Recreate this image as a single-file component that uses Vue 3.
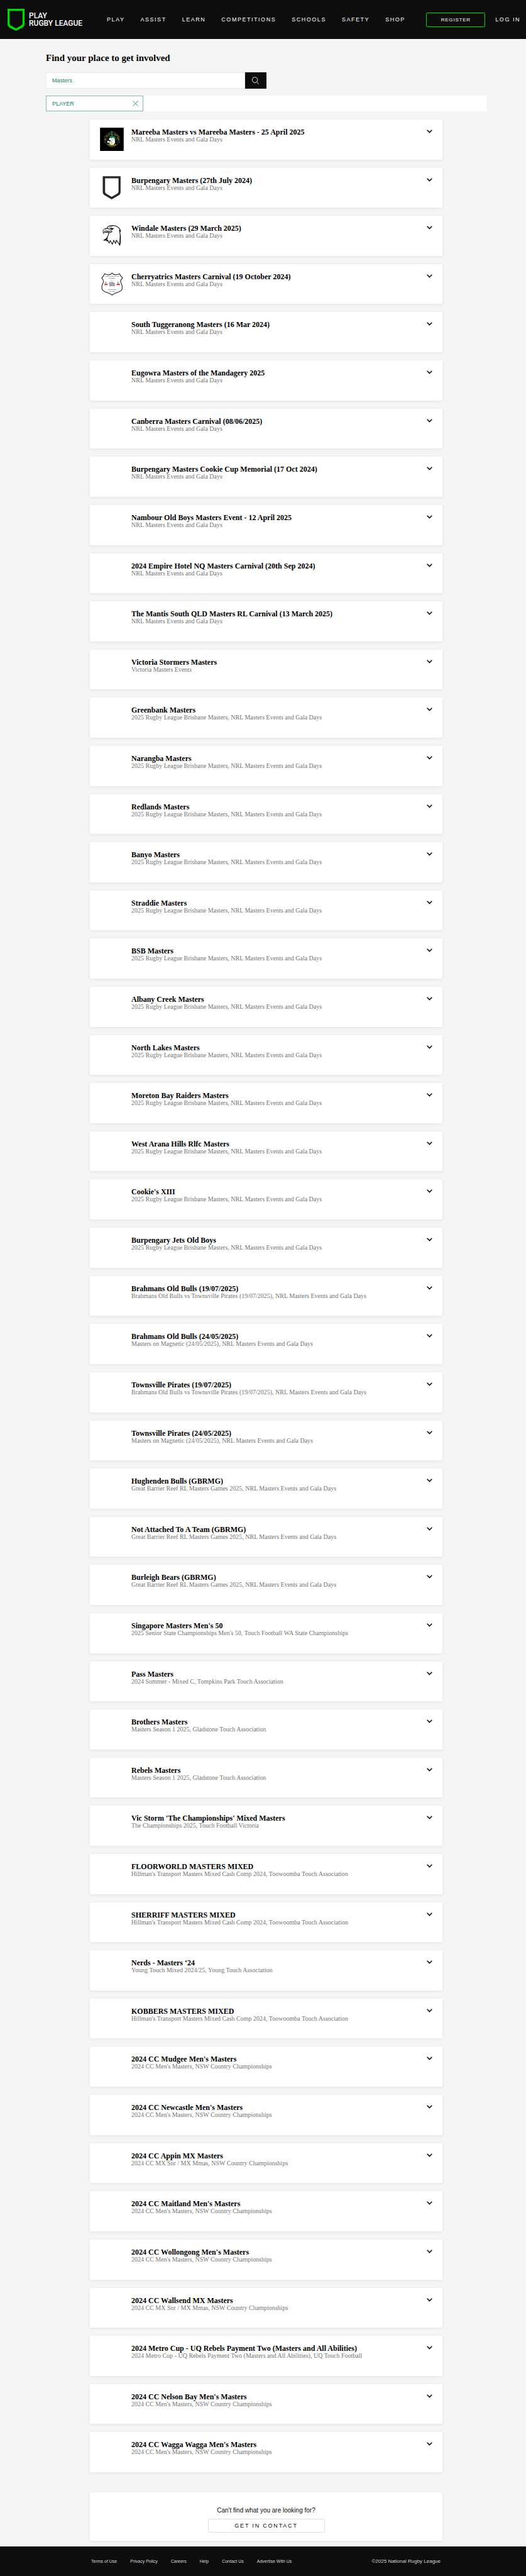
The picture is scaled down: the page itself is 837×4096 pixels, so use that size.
<script setup>
import { ref } from 'vue'

const navLinks = ['PLAY', 'ASSIST', 'LEARN', 'COMPETITIONS', 'SCHOOLS', 'SAFETY', 'SHOP']
const footerLinks = ['Terms of Use', 'Privacy Policy', 'Careers', 'Help', 'Contact Us', 'Advertise With Us']

const query = ref('Masters')

const gala = 'NRL Masters Events and Gala Days'
const brisbane = '2025 Rugby League Brisbane Masters, ' + gala
const pirates = 'Brahmans Old Bulls vs Townsville Pirates (19/07/2025), ' + gala
const magnetic = 'Masters on Magnetic (24/05/2025), ' + gala
const reef = 'Great Barrier Reef RL Masters Games 2025, ' + gala
const gladstone = 'Masters Season 1 2025, Gladstone Touch Association'
const hillman = "Hillman's Transport Masters Mixed Cash Comp 2024, Toowoomba Touch Association"
const country = "2024 CC Men's Masters, NSW Country Championships"
const countryMixed = '2024 CC MX Snr / MX Mmas, NSW Country Championships'

const results = [
  { title: 'Mareeba Masters vs Mareeba Masters - 25 April 2025', detail: gala, crest: 'mareeba' },
  { title: 'Burpengary Masters (27th July 2024)', detail: gala, crest: 'shield' },
  { title: 'Windale Masters (29 March 2025)', detail: gala, crest: 'eagle' },
  { title: 'Cherryatrics Masters Carnival (19 October 2024)', detail: gala, crest: 'cherry' },
  { title: 'South Tuggeranong Masters (16 Mar 2024)', detail: gala },
  { title: 'Eugowra Masters of the Mandagery 2025', detail: gala },
  { title: 'Canberra Masters Carnival (08/06/2025)', detail: gala },
  { title: 'Burpengary Masters Cookie Cup Memorial (17 Oct 2024)', detail: gala },
  { title: 'Nambour Old Boys Masters Event - 12 April 2025', detail: gala },
  { title: '2024 Empire Hotel NQ Masters Carnival (20th Sep 2024)', detail: gala },
  { title: 'The Mantis South QLD Masters RL Carnival (13 March 2025)', detail: gala },
  { title: 'Victoria Stormers Masters', detail: 'Victoria Masters Events' },
  { title: 'Greenbank Masters', detail: brisbane },
  { title: 'Narangba Masters', detail: brisbane },
  { title: 'Redlands Masters', detail: brisbane },
  { title: 'Banyo Masters', detail: brisbane },
  { title: 'Straddie Masters', detail: brisbane },
  { title: 'BSB Masters', detail: brisbane },
  { title: 'Albany Creek Masters', detail: brisbane },
  { title: 'North Lakes Masters', detail: brisbane },
  { title: 'Moreton Bay Raiders Masters', detail: brisbane },
  { title: 'West Arana Hills Rlfc Masters', detail: brisbane },
  { title: "Cookie's XIII", detail: brisbane },
  { title: 'Burpengary Jets Old Boys', detail: brisbane },
  { title: 'Brahmans Old Bulls (19/07/2025)', detail: pirates },
  { title: 'Brahmans Old Bulls (24/05/2025)', detail: magnetic },
  { title: 'Townsville Pirates (19/07/2025)', detail: pirates },
  { title: 'Townsville Pirates (24/05/2025)', detail: magnetic },
  { title: 'Hughenden Bulls (GBRMG)', detail: reef },
  { title: 'Not Attached To A Team (GBRMG)', detail: reef },
  { title: 'Burleigh Bears (GBRMG)', detail: reef },
  { title: "Singapore Masters Men's 50", detail: "2025 Senior State Championships Men's 50, Touch Football WA State Championships" },
  { title: 'Pass Masters', detail: '2024 Summer - Mixed C, Tompkins Park Touch Association' },
  { title: 'Brothers Masters', detail: gladstone },
  { title: 'Rebels Masters', detail: gladstone },
  { title: "Vic Storm 'The Championships' Mixed Masters", detail: 'The Championships 2025, Touch Football Victoria' },
  { title: 'FLOORWORLD MASTERS MIXED', detail: hillman },
  { title: 'SHERRIFF MASTERS MIXED', detail: hillman },
  { title: 'Nerds - Masters ‘24', detail: 'Young Touch Mixed 2024/25, Young Touch Association' },
  { title: 'KOBBERS MASTERS MIXED', detail: hillman },
  { title: "2024 CC Mudgee Men's Masters", detail: country },
  { title: "2024 CC Newcastle Men's Masters", detail: country },
  { title: '2024 CC Appin MX Masters', detail: countryMixed },
  { title: "2024 CC Maitland Men's Masters", detail: country },
  { title: "2024 CC Wollongong Men's Masters", detail: country },
  { title: '2024 CC Wallsend MX Masters', detail: countryMixed },
  {
    title: '2024 Metro Cup - UQ Rebels Payment Two (Masters and All Abilities)',
    detail: '2024 Metro Cup - UQ Rebels Payment Two (Masters and All Abilities), UQ Touch Football',
  },
  { title: "2024 CC Nelson Bay Men's Masters", detail: country },
  { title: "2024 CC Wagga Wagga Men's Masters", detail: country },
]
</script>

<template>
  <div class="page">
    <header class="header">
      <a class="brand" href="#" aria-label="Play Rugby League">
        <svg class="brand-mark" viewBox="0 0 43 56" aria-hidden="true">
          <path fill="#00dc00" fill-rule="evenodd" d="M0 0H43V39Q43 44 39 47L21.500 56 4 47Q0 44 0 39ZM5 5V37Q5 40 8 42.500L21.500 50 35 42.500Q38 40 38 37V5Z" />
        </svg>
        <span class="brand-name">PLAY<br />RUGBY LEAGUE</span>
      </a>
      <nav class="nav">
        <a v-for="link in navLinks" :key="link" href="#">{{ link }}</a>
      </nav>
      <div class="account">
        <button class="register" type="button">REGISTER</button>
        <a class="login" href="#">LOG IN</a>
      </div>
    </header>

    <main class="main">
      <h1 class="heading">Find your place to get involved</h1>
      <form class="search" role="search" @submit.prevent>
        <input v-model="query" class="search-input" type="text" aria-label="Search" />
        <button class="search-button" type="submit" aria-label="Search">
          <svg viewBox="0 0 18 19" aria-hidden="true">
            <circle cx="7.500" cy="8" r="7" fill="none" stroke="#fff" stroke-width="1.500" />
            <path d="M12 13.500L17.500 18.500" stroke="#fff" stroke-width="1.500" />
          </svg>
        </button>
      </form>
      <div class="filters">
        <button class="chip" type="button">
          <span>PLAYER</span>
          <svg viewBox="0 0 14 14" aria-hidden="true">
            <path d="M0.500 0.500L13.500 13.500M13.500 0.500L0.500 13.500" stroke="#138560" stroke-width="1.300" />
          </svg>
        </button>
      </div>

      <ul class="results">
        <li v-for="item in results" :key="item.title" class="card">
          <div class="crest">
            <svg v-if="item.crest === 'mareeba'" viewBox="0 0 183 180" aria-hidden="true">
              <rect width="183" height="180" fill="#000" />
              <circle cx="92" cy="91" r="57" fill="none" stroke="#8b8f8c" stroke-width="2.500" />
              <circle cx="92" cy="91" r="38" fill="none" stroke="#7d827f" stroke-width="2" />
              <path d="M34 66L46 72V109L34 116ZM150 66L138 72V109L150 116Z" fill="#000" stroke="#8b8f8c" stroke-width="2" />
              <path d="M41 84V100M143 84V100" stroke="#d8c21c" stroke-width="5" stroke-dasharray="3 2" />
              <path d="M78 37Q81 27 86 29V22H91V29Q101 28 105 36L98 40Q88 36 78 41Z" fill="#12644a" />
              <path d="M82 42Q92 38 99 44V56Q91 62 84 54Z" fill="#555b58" />
              <path d="M69 72Q78 59 95 59Q116 62 121 80L117 105 101 91 76 80Z" fill="#0d7541" />
              <path d="M70 84Q81 76 91 82Q101 69 110 82Q121 97 113 123L98 132 77 128 70 113 58 119 56 105 66 101 77 109 85 101 68 94Z" fill="#fff" />
              <path d="M71 120L87 107 112 119 104 134 82 132Z" fill="#fff" />
              <path d="M86 84L96 98 87 110M101 76L112 104M71 117L91 119M87 107L99 122" fill="none" stroke="#25322c" stroke-width="2" />
              <path d="M75 107L94 104M80 124L98 126" stroke="#d9c422" stroke-width="3" />
              <g class="crest-yellow">
                <text x="54 61 69" y="74 64 57" rotate="-58 -43 -29">OLD</text>
                <text x="107 117 125 130" y="53 58 66 76" rotate="28 42 56 70">BOYS</text>
                <text x="56 67 77 87 98 108 118" y="130 138 142 144 144 142 137" rotate="36 22 10 -1 -12 -23 -35">MAREEBA</text>
              </g>
            </svg>
            <svg v-else-if="item.crest === 'shield'" viewBox="0 0 183 180" aria-hidden="true">
              <path fill="#272727" fill-rule="evenodd" d="M21 1H159V123Q159 140 145 148L90 180 36 148Q21 140 21 123ZM39 17V120Q39 130 48 136L90 160 132 136Q143 130 143 120V17Z" />
            </svg>
            <svg v-else-if="item.crest === 'eagle'" viewBox="0 0 183 180" aria-hidden="true">
              <g fill="none" stroke="#000" stroke-linejoin="round" stroke-linecap="round">
                <path stroke-width="5" d="M54 34Q57 14 94 12Q126 12 145 31Q154 40 158 51L149 49 158 60 152 61Q158 80 158 108Q159 140 153 166L141 145 126 127 120 152 106 126 95 158 79 129 71 148 58 123 54 134 50 124 28 126Q46 120 55 105Q64 90 68 70" />
                <path stroke-width="4" d="M54 34Q31 34 24 48Q20 62 27 75Q29 65 38 64L79 69 93 60 83 47Q71 37 54 34M29 59Q45 48 66 55L90 60M38 64Q54 57 76 64" />
                <path stroke-width="3" d="M38 42Q43 38 47 42M54 34L67 41M70 30Q78 20 94 20" />
              </g>
              <path fill="#000" d="M77 33Q91 30 106 34L108 40Q101 37 97 45Q87 49 81 39L75 38ZM28 126Q48 120 60 103L61 110Q55 122 43 129ZM149 47L160 61 153 64ZM154 80L161 98 154 164 150 158Z" />
            </svg>
            <svg v-else-if="item.crest === 'cherry'" viewBox="0 0 183 180" aria-hidden="true">
              <path fill="#fff" stroke="#3c3c3c" stroke-width="6" stroke-linejoin="round" d="M93 5Q84 17 70 19Q50 20 36 11Q30 27 13 44Q27 56 27 73Q12 102 15 128Q20 146 55 156Q79 164 93 176Q107 164 131 156Q166 146 171 128Q174 102 159 73Q159 56 175 44Q156 27 150 11Q136 20 116 19Q102 17 93 5Z" />
              <g class="crest-words" text-anchor="middle">
                <text x="93" y="35">YOUNG CABBY LEAGUE</text>
                <text x="93" y="51">MASTERS</text>
                <text x="93" y="137">CHERRYATRICS</text>
                <text x="93" y="152">EST. 2020</text>
              </g>
              <path fill="none" stroke="#d1959b" stroke-width="2" d="M84 57Q93 53 96 60L104 69 97 77 82 75 84 65 93 62" />
              <path fill="#b9b6c5" d="M71 80L80 73 102 76 117 86 114 105 74 108 70 96Z" />
              <path fill="none" stroke="#77758a" stroke-width="2" d="M67 84L110 87M76 76L85 105M97 76L91 108M103 77L111 104M71 98H116" />
              <circle cx="79" cy="103" r="6" fill="none" stroke="#77758a" stroke-width="2" />
              <circle cx="107" cy="103" r="6" fill="none" stroke="#77758a" stroke-width="2" />
              <path fill="#55a64b" d="M36 73L55 78 43 83ZM131 73L151 78 139 83Z" />
              <path fill="none" stroke="#55a64b" stroke-width="2" d="M43 76L40 91M43 76L52 91M138 76L135 91M138 76L147 91" />
              <g fill="#d71945"><circle cx="40" cy="94" r="6" /><circle cx="52" cy="94" r="6" /><circle cx="135" cy="94" r="6" /><circle cx="147" cy="94" r="6" /></g>
            </svg>
          </div>
          <div class="card-text">
            <h2>{{ item.title }}</h2>
            <p>{{ item.detail }}</p>
          </div>
          <button class="expand" type="button" :aria-label="'Show ' + item.title">
            <svg viewBox="0 0 14 9" aria-hidden="true">
              <path d="M1 1L7 7 13 1" fill="none" stroke="#111" stroke-width="2.500" />
            </svg>
          </button>
        </li>
      </ul>

      <section class="contact">
        <p>Can't find what you are looking for?</p>
        <button type="button">GET IN CONTACT</button>
      </section>
    </main>

    <footer class="footer">
      <nav class="footer-links">
        <a v-for="link in footerLinks" :key="link" href="#">{{ link }}</a>
      </nav>
      <span class="copyright">©2025 National Rugby League</span>
    </footer>
  </div>
</template>

<style>
body {
  margin: 0;
  background: #f5f5f5;
}
</style>

<style scoped>
.page {
  display: flex;
  flex-direction: column;
  min-height: 100vh;
  font-family: "Liberation Sans", Arial, sans-serif;
  color: #0d0d0d;
}

.page * {
  box-sizing: border-box;
}

.page a {
  color: inherit;
  text-decoration: none;
}

.page button {
  padding: 0;
  font-family: inherit;
  color: inherit;
  cursor: pointer;
}

.page svg {
  display: block;
}

.header {
  display: flex;
  align-items: center;
  height: 62px;
  padding: 0 9px 0 12px;
  background: #0d0d0d;
  color: #fff;
}

.brand {
  display: flex;
  align-items: center;
  gap: 7px;
  width: 158px;
}

.brand-mark {
  width: 27px;
  height: 35px;
}

.brand-name {
  font: 500 12px/12px Roboto, sans-serif;
  white-space: nowrap;
}

.nav {
  display: flex;
  gap: 25px;
  font-size: 9px;
  letter-spacing: 0.17em;
}

.account {
  display: flex;
  align-items: center;
  gap: 16px;
  margin-left: auto;
}

.register {
  width: 94px;
  height: 23px;
  border: 1px solid #00dc00;
  border-radius: 2px;
  background: transparent;
  font-size: 8px;
  letter-spacing: 0.1em;
}

.login {
  font-size: 9px;
  letter-spacing: 0.17em;
}

.main {
  flex: 1;
  display: flex;
  flex-direction: column;
  padding: 21px 63px 9px 73px;
}

.heading {
  margin: 0 0 14px;
  font: bold 15px/18px "Liberation Serif", "Times New Roman", serif;
  color: #000;
}

.search {
  display: flex;
  width: 50%;
  height: 26px;
}

.search-input {
  flex: 1;
  min-width: 0;
  padding: 0 9px;
  border: 1px solid #ebebf0;
  border-radius: 0;
  outline: none;
  background: #fff;
  font: 9px "Liberation Sans", Arial, sans-serif;
  color: #138560;
}

.search-button {
  display: grid;
  place-items: center;
  width: 34px;
  border: 0;
  background: #0d0d0d;
}

.search-button svg {
  width: 11px;
  height: 12px;
}

.filters {
  height: 25px;
  margin: 11px 0 13px;
  background: #fff;
}

.page .chip {
  display: flex;
  align-items: center;
  justify-content: space-between;
  width: 155px;
  height: 25px;
  padding: 0 7px 0 9px;
  border: 1px solid #7cbda7;
  background: #fff;
  font-size: 9px;
  color: #138560;
}

.chip svg {
  width: 9px;
  height: 9px;
}

.results {
  flex: 1;
  display: grid;
  grid-auto-rows: 1fr;
  gap: 13px;
  margin: 0 70px;
  padding: 0;
  list-style: none;
}

.card,
.contact {
  border-radius: 2px;
  background: #fff;
  box-shadow: 0 1px 5px rgba(20, 20, 60, 0.08);
}

.card {
  display: flex;
  padding: 13px 16px;
}

.crest {
  width: 38px;
  height: 37px;
  margin-right: 12px;
}

.crest svg {
  width: 38px;
  height: 37px;
}

.crest-yellow {
  font: bold 15px "Liberation Sans", Arial, sans-serif;
  fill: #dfc51c;
}

.crest-words {
  font: bold 9px "Liberation Sans", Arial, sans-serif;
  fill: #333;
}

.card-text {
  flex: 1;
  padding-top: 1px;
  font-family: "Liberation Serif", "Times New Roman", serif;
}

.card-text h2 {
  margin: 0;
  font-size: 12px;
  line-height: 12px;
  color: #000;
}

.card-text p {
  margin: 0;
  font-size: 10px;
  line-height: 12px;
  color: #757575;
}

.expand {
  display: grid;
  place-items: center;
  width: 9px;
  height: 12px;
  border: 0;
  background: transparent;
}

.expand svg {
  width: 9px;
  height: 6px;
}

.contact {
  display: flex;
  flex-direction: column;
  align-items: center;
  gap: 7px;
  margin: 32px 70px 0;
  padding: 23px 16px 13px;
}

.contact p {
  margin: 0;
  font-size: 10px;
  line-height: 12px;
}

.contact button {
  width: 186px;
  height: 22px;
  border: 1px solid #e2e2e4;
  border-radius: 2px;
  background: #fff;
  font-size: 9px;
  letter-spacing: 0.2em;
}

.footer {
  display: flex;
  align-items: center;
  justify-content: space-between;
  height: 47px;
  padding: 0 136px 0 145px;
  background: #0d0d0d;
  color: #d6d6d6;
  font-size: 7px;
}

.footer-links {
  display: flex;
  gap: 21px;
}

.copyright {
  font-size: 8px;
}
</style>
